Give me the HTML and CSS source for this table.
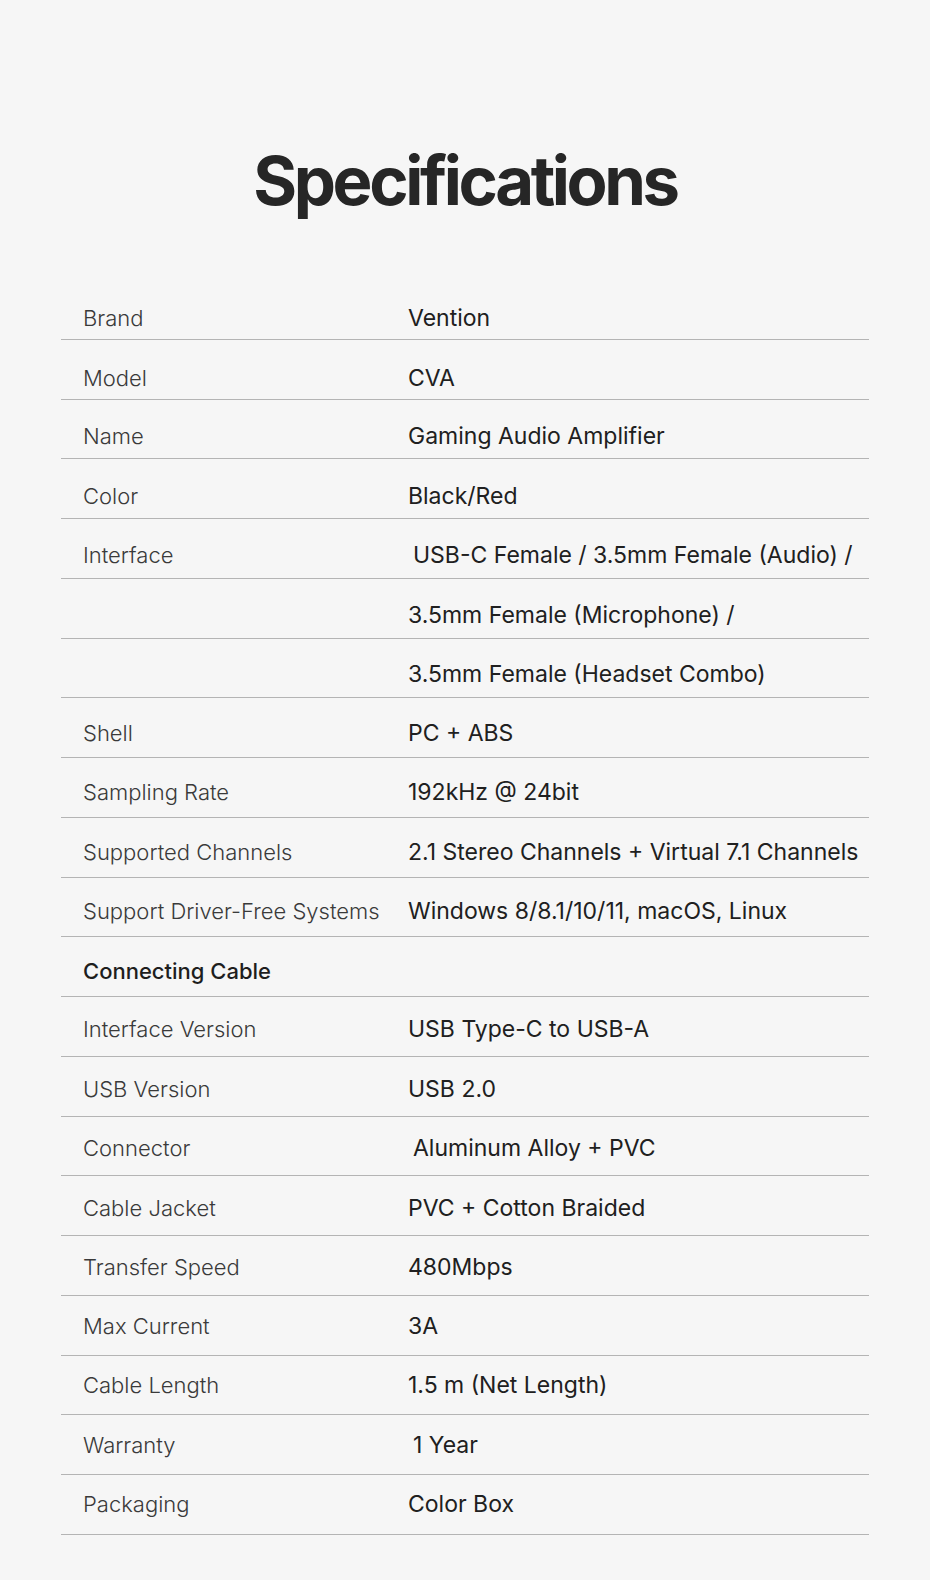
FILE: index.html
```html
<!DOCTYPE html>
<html lang="en">
<head>
<meta charset="utf-8">
<title>Specifications</title>
<link rel="stylesheet" href="styles.css">
</head>
<body>
<main class="page">
  <h1 class="title">Specifications</h1>
  <div class="specs">
    <div class="row"><span class="label">Brand</span><span class="value">Vention</span></div>
    <div class="row"><span class="label">Model</span><span class="value">CVA</span></div>
    <div class="row"><span class="label">Name</span><span class="value">Gaming Audio Amplifier</span></div>
    <div class="row"><span class="label">Color</span><span class="value">Black/Red</span></div>
    <div class="row"><span class="label">Interface</span><span class="value indent">USB-C Female / 3.5mm Female (Audio) /</span></div>
    <div class="row"><span class="label"></span><span class="value">3.5mm Female (Microphone) /</span></div>
    <div class="row"><span class="label"></span><span class="value">3.5mm Female (Headset Combo)</span></div>
    <div class="row"><span class="label">Shell</span><span class="value">PC + ABS</span></div>
    <div class="row"><span class="label">Sampling Rate</span><span class="value">192kHz @ 24bit</span></div>
    <div class="row"><span class="label">Supported Channels</span><span class="value">2.1 Stereo Channels + Virtual 7.1 Channels</span></div>
    <div class="row"><span class="label">Support Driver-Free Systems</span><span class="value">Windows 8/8.1/10/11, macOS, Linux</span></div>
    <div class="row"><span class="label section">Connecting Cable</span><span class="value"></span></div>
    <div class="row"><span class="label">Interface Version</span><span class="value">USB Type-C to USB-A</span></div>
    <div class="row"><span class="label">USB Version</span><span class="value">USB 2.0</span></div>
    <div class="row"><span class="label">Connector</span><span class="value indent">Aluminum Alloy + PVC</span></div>
    <div class="row"><span class="label">Cable Jacket</span><span class="value">PVC + Cotton Braided</span></div>
    <div class="row"><span class="label">Transfer Speed</span><span class="value">480Mbps</span></div>
    <div class="row"><span class="label">Max Current</span><span class="value">3A</span></div>
    <div class="row"><span class="label">Cable Length</span><span class="value">1.5 m (Net Length)</span></div>
    <div class="row"><span class="label">Warranty</span><span class="value indent">1 Year</span></div>
    <div class="row"><span class="label">Packaging</span><span class="value">Color Box</span></div>
  </div>
</main>
</body>
</html>
```

FILE: styles.css
```css
html, body {
  margin: 0;
  padding: 0;
  background: #f6f6f6;
}

.page {
  width: 930px;
  height: 1580px;
  font-family: Inter, "Noto Sans", sans-serif;
  color: #222;
}

.title {
  margin: 0;
  padding-top: 139px;
  height: 280px;
  box-sizing: border-box;
  text-align: center;
  font-size: 67px;
  line-height: 84px;
  font-weight: 700;
  letter-spacing: -3.4px;
  color: #262626;
}

.specs {
  margin-left: 61px;
  width: 808px;
}

.row {
  display: flex;
  align-items: flex-end;
  height: 59.75px;
  box-sizing: border-box;
  border-bottom: 1px solid #b4b4b4;
  padding-bottom: 7px;
  font-size: 22px;
  line-height: 28px;
}

/* text sits slightly higher in each successive row */
.row:nth-child(n+3)  { padding-bottom: 7.9px; }
.row:nth-child(n+5)  { padding-bottom: 8.8px; }
.row:nth-child(n+7)  { padding-bottom: 9.7px; }
.row:nth-child(n+9)  { padding-bottom: 10.6px; }
.row:nth-child(n+11) { padding-bottom: 11.5px; }
.row:nth-child(n+13) { padding-bottom: 12.4px; }
.row:nth-child(n+15) { padding-bottom: 13.3px; }
.row:nth-child(n+17) { padding-bottom: 14.2px; }
.row:nth-child(n+19) { padding-bottom: 15.1px; }
.row:nth-child(n+21) { padding-bottom: 16px; }

.label {
  width: 325px;
  padding-left: 22px;
  font-weight: 300;
  color: #3a3a3a;
  white-space: nowrap;
}

.label.section {
  font-weight: 500;
  color: #1e1e1e;
}

.value {
  flex: 1;
  font-size: 23px;
  font-weight: 400;
  color: #202020;
  white-space: nowrap;
}

.value.indent {
  padding-left: 5px;
}
```
